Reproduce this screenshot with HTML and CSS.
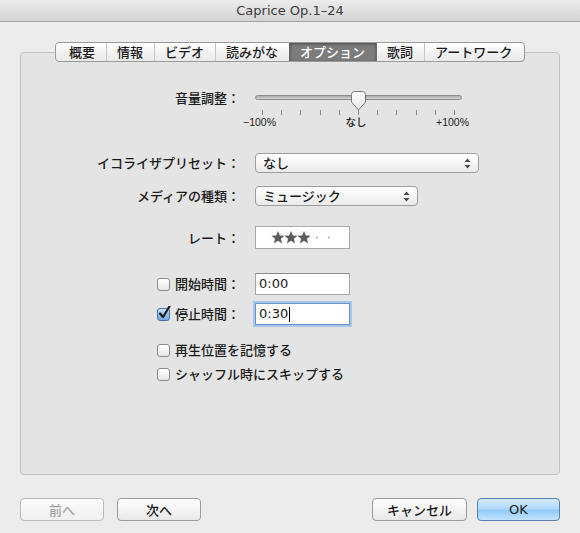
FILE: index.html
```html
<!DOCTYPE html>
<html lang="ja">
<head>
<meta charset="utf-8">
<title>Caprice Op.1–24</title>
<link rel="stylesheet" href="styles.css">
</head>
<body>
<div class="window">
  <div class="titlebar">Caprice Op.1–24</div>
  <div class="content">
    <div class="panel">
      <div class="tabs">
        <div class="tab">概要</div>
        <div class="tab">情報</div>
        <div class="tab">ビデオ</div>
        <div class="tab">読みがな</div>
        <div class="tab sel">オプション</div>
        <div class="tab">歌詞</div>
        <div class="tab">アートワーク</div>
      </div>

      <div class="row row-volume">
        <div class="lbl">音量調整：</div>
        <div class="slider">
          <div class="track"></div>
          <svg class="thumb" width="17" height="20" viewBox="0 0 17 20">
            <defs>
              <linearGradient id="tg" x1="0" y1="0" x2="0" y2="1">
                <stop offset="0" stop-color="#ffffff"/>
                <stop offset="1" stop-color="#e4e4e4"/>
              </linearGradient>
            </defs>
            <path d="M1.5 3.5 Q1.5 0.5 4.5 0.5 H12.5 Q15.5 0.5 15.5 3.5 V11 L8.5 19 L1.5 11 Z" fill="url(#tg)" stroke="#7a7a7a" stroke-width="1"/>
          </svg>
          <div class="ticks">
            <i></i><i></i><i></i><i></i><i></i><i></i><i></i><i></i><i></i><i></i><i></i>
          </div>
          <div class="scale">
            <span class="num">−100%</span>
            <span>なし</span>
            <span class="num">+100%</span>
          </div>
        </div>
      </div>

      <div class="row row-preset">
        <div class="lbl">イコライザプリセット：</div>
        <div class="popup popup-wide">
          <span>なし</span>
          <svg class="arrows" width="7" height="11" viewBox="0 0 7 11"><path d="M3.5 0.5 L6.5 4 H0.5 Z M0.5 7 H6.5 L3.5 10.5 Z" fill="#4a4a4a"/></svg>
        </div>
      </div>

      <div class="row row-media">
        <div class="lbl">メディアの種類：</div>
        <div class="popup popup-mid">
          <span>ミュージック</span>
          <svg class="arrows" width="7" height="11" viewBox="0 0 7 11"><path d="M3.5 0.5 L6.5 4 H0.5 Z M0.5 7 H6.5 L3.5 10.5 Z" fill="#4a4a4a"/></svg>
        </div>
      </div>

      <div class="row row-rate">
        <div class="lbl">レート：</div>
        <div class="rating">
          <svg width="93" height="21" viewBox="0 0 93 21">
            <g fill="#5c5c5c">
              <polygon points="22,4 23.8,8.6 28.6,8.8 24.9,11.8 26.1,16.5 22,13.8 17.9,16.5 19.1,11.8 15.4,8.8 20.2,8.6"/>
              <polygon points="35,4 36.8,8.6 41.6,8.8 37.9,11.8 39.1,16.5 35,13.8 30.9,16.5 32.1,11.8 28.4,8.8 33.2,8.6"/>
              <polygon points="48,4 49.8,8.6 54.6,8.8 50.9,11.8 52.1,16.5 48,13.8 43.9,16.5 45.1,11.8 41.4,8.8 46.2,8.6"/>
            </g>
            <circle cx="61" cy="10.5" r="1.1" fill="#b5b5b5"/>
            <circle cx="73" cy="10.5" r="1.1" fill="#b5b5b5"/>
          </svg>
        </div>
      </div>

      <div class="row row-start">
        <div class="lbl"><span class="cb"></span>開始時間：</div>
        <div class="field">0:00</div>
      </div>

      <div class="row row-stop">
        <div class="lbl"><span class="cb checked"><svg width="15" height="15" viewBox="0 0 15 15"><path d="M3 7.5 L6 11 L12.5 0.5" fill="none" stroke="#1c1c1c" stroke-width="2.2" stroke-linecap="round" stroke-linejoin="round"/></svg></span>停止時間：</div>
        <div class="field focus">0:30<span class="caret"></span></div>
      </div>

      <div class="row row-remember check-row">
        <span class="cb"></span>再生位置を記憶する
      </div>
      <div class="row row-shuffle check-row">
        <span class="cb"></span>シャッフル時にスキップする
      </div>
    </div>

    <div class="buttons">
      <div class="btn btn-nav disabled">前へ</div>
      <div class="btn btn-nav btn-next">次へ</div>
      <div class="spacer"></div>
      <div class="btn btn-cancel">キャンセル</div>
      <div class="btn btn-ok">OK</div>
    </div>
  </div>
</div>
</body>
</html>
```

FILE: styles.css
```css
* {
  box-sizing: border-box;
}

html, body {
  margin: 0;
  padding: 0;
}

body {
  width: 580px;
  height: 533px;
  overflow: hidden;
  background: #ececec;
  font-family: "DejaVu Sans", "Noto Sans CJK JP", sans-serif;
  font-size: 13px;
  color: #1e1e1e;
}

.window {
  width: 580px;
  height: 533px;
  background: #ececec;
}

.titlebar {
  height: 22px;
  line-height: 21px;
  text-align: center;
  font-size: 13px;
  color: #3c3c3c;
  background: linear-gradient(#ececec, #d4d4d4);
  border-bottom: 1px solid #a2a2a2;
}

.content {
  padding: 30px 20px 0;
}

.panel {
  height: 423px;
  border: 1px solid #c3c3c3;
  border-radius: 4px;
  background: #e4e4e4;
}

/* tabs */
.tabs {
  display: flex;
  width: max-content;
  height: 20px;
  margin: -11px 0 0 34px;
  border: 1px solid #9a9a9a;
  border-radius: 4px;
  overflow: hidden;
  background: linear-gradient(#ffffff, #f3f3f3 50%, #e9e9e9);
}

.tab {
  padding: 0 10.5px;
  line-height: 18px;
  font-family: "Noto Sans CJK JP", sans-serif;
  font-weight: 500;
  font-size: 13px;
  color: #1a1a1a;
  border-left: 1px solid #c6c6c6;
}

.tab:first-child {
  border-left: none;
  padding-left: 13px;
}

.tab:last-child {
  padding-right: 12px;
}

.tab.sel {
  background: #7c7c7c;
  color: #ffffff;
  border-left-color: #6a6a6a;
  box-shadow: inset 0 1px 3px rgba(0, 0, 0, 0.45);
}

.tab.sel + .tab {
  border-left-color: #6a6a6a;
}

/* form rows */
.row {
  display: flex;
  align-items: center;
}

.lbl {
  width: 219px;
  flex: none;
  margin-right: 15px;
  display: flex;
  justify-content: flex-end;
  align-items: center;
  line-height: 20px;
  font-family: "Noto Sans CJK JP", sans-serif;
  font-weight: 500;
  font-size: 13px;
  color: #1a1a1a;
}

.row-volume {
  margin-top: 26px;
  align-items: flex-start;
}

.row-preset { margin-top: 25px; }
.row-media { margin-top: 13px; }
.row-rate { margin-top: 20px; }
.row-start { margin-top: 24px; }
.row-stop { margin-top: 8px; }
.row-remember { margin-top: 15px; }
.row-shuffle { margin-top: 4px; }

/* slider */
.slider {
  position: relative;
  width: 207px;
  height: 40px;
}

.track {
  margin-top: 7px;
  height: 5px;
  border: 1px solid #8c8c8c;
  border-radius: 3px;
  background: linear-gradient(#a9a9a9, #d6d6d6);
}

.thumb {
  position: absolute;
  left: 95px;
  top: 3px;
}

.ticks {
  display: flex;
  justify-content: space-between;
  margin: 10px 7px 0;
  height: 5px;
}

.ticks i {
  display: block;
  width: 1px;
  height: 5px;
  background: #8a8a8a;
}

.scale {
  display: flex;
  justify-content: space-between;
  margin: 1px -7px 0 -12px;
  font-family: "Noto Sans CJK JP", sans-serif;
  font-weight: 500;
  font-size: 10.5px;
  line-height: 12px;
  color: #222222;
}

.scale .num {
  font-family: "Liberation Sans", sans-serif;
  font-weight: 400;
}

/* popups */
.popup {
  height: 20px;
  display: flex;
  align-items: center;
  justify-content: space-between;
  padding: 0 7px 0 7px;
  border: 1px solid #9e9e9e;
  border-radius: 4px;
  background: linear-gradient(#ffffff, #f6f6f6 50%, #e9e9e9);
  font-family: "Noto Sans CJK JP", sans-serif;
  font-weight: 500;
  font-size: 13px;
  line-height: 18px;
  color: #1a1a1a;
}

.popup-wide { width: 224px; }
.popup-mid { width: 163px; }

.arrows {
  flex: none;
}

/* rating */
.rating {
  width: 95px;
  height: 23px;
  border: 1px solid #a9a9a9;
  background: #ffffff;
}

.rating svg {
  display: block;
}

/* checkboxes */
.cb {
  position: relative;
  flex: none;
  width: 13px;
  height: 13px;
  margin-right: 5px;
  border: 1px solid #8c8c8c;
  border-radius: 3px;
  background: linear-gradient(#ffffff, #e6e6e6);
}

.cb.checked {
  border-color: #4e72a6;
  background: linear-gradient(#cfe6fb, #8cbcee 55%, #75a9e6);
}

.cb.checked svg {
  position: absolute;
  left: -1px;
  top: -3px;
}

.check-row {
  padding-left: 136px;
  height: 20px;
  font-family: "Noto Sans CJK JP", sans-serif;
  font-weight: 500;
  font-size: 13px;
  line-height: 20px;
  color: #1a1a1a;
}

/* text fields */
.field {
  width: 95px;
  height: 22px;
  padding-left: 3px;
  border: 1px solid #a5a5a5;
  border-top-color: #8a8a8a;
  background: #ffffff;
  font-size: 13px;
  line-height: 20px;
  color: #1a1a1a;
  display: flex;
  align-items: center;
}

.field.focus {
  border-color: #6b92c9;
  box-shadow: 0 0 0 2px #a6c6ec;
}

.caret {
  display: inline-block;
  width: 1px;
  height: 15px;
  margin-left: 1px;
  background: #000000;
}

/* bottom buttons */
.buttons {
  display: flex;
  margin-top: 23px;
  height: 23px;
}

.spacer {
  flex: 1;
}

.btn {
  height: 23px;
  border: 1px solid #9c9c9c;
  border-radius: 4px;
  background: linear-gradient(#ffffff, #f4f4f4 50%, #e8e8e8);
  text-align: center;
  line-height: 21px;
  font-family: "Noto Sans CJK JP", sans-serif;
  font-weight: 500;
  font-size: 13px;
  color: #1a1a1a;
}

.btn-nav { width: 84px; }
.btn-next { margin-left: 13px; }
.btn-cancel { width: 95px; }

.btn-ok {
  width: 83px;
  margin-left: 10px;
  border-color: #5a7eb0;
  background: linear-gradient(#d6ebfd, #b1dafb 45%, #93cbf8 55%, #c2e3fd);
  font-family: "DejaVu Sans", sans-serif;
  font-weight: 400;
}

.btn.disabled {
  color: #a3a3a3;
  border-color: #bcbcbc;
  background: linear-gradient(#fbfbfb, #f0f0f0);
}
```
